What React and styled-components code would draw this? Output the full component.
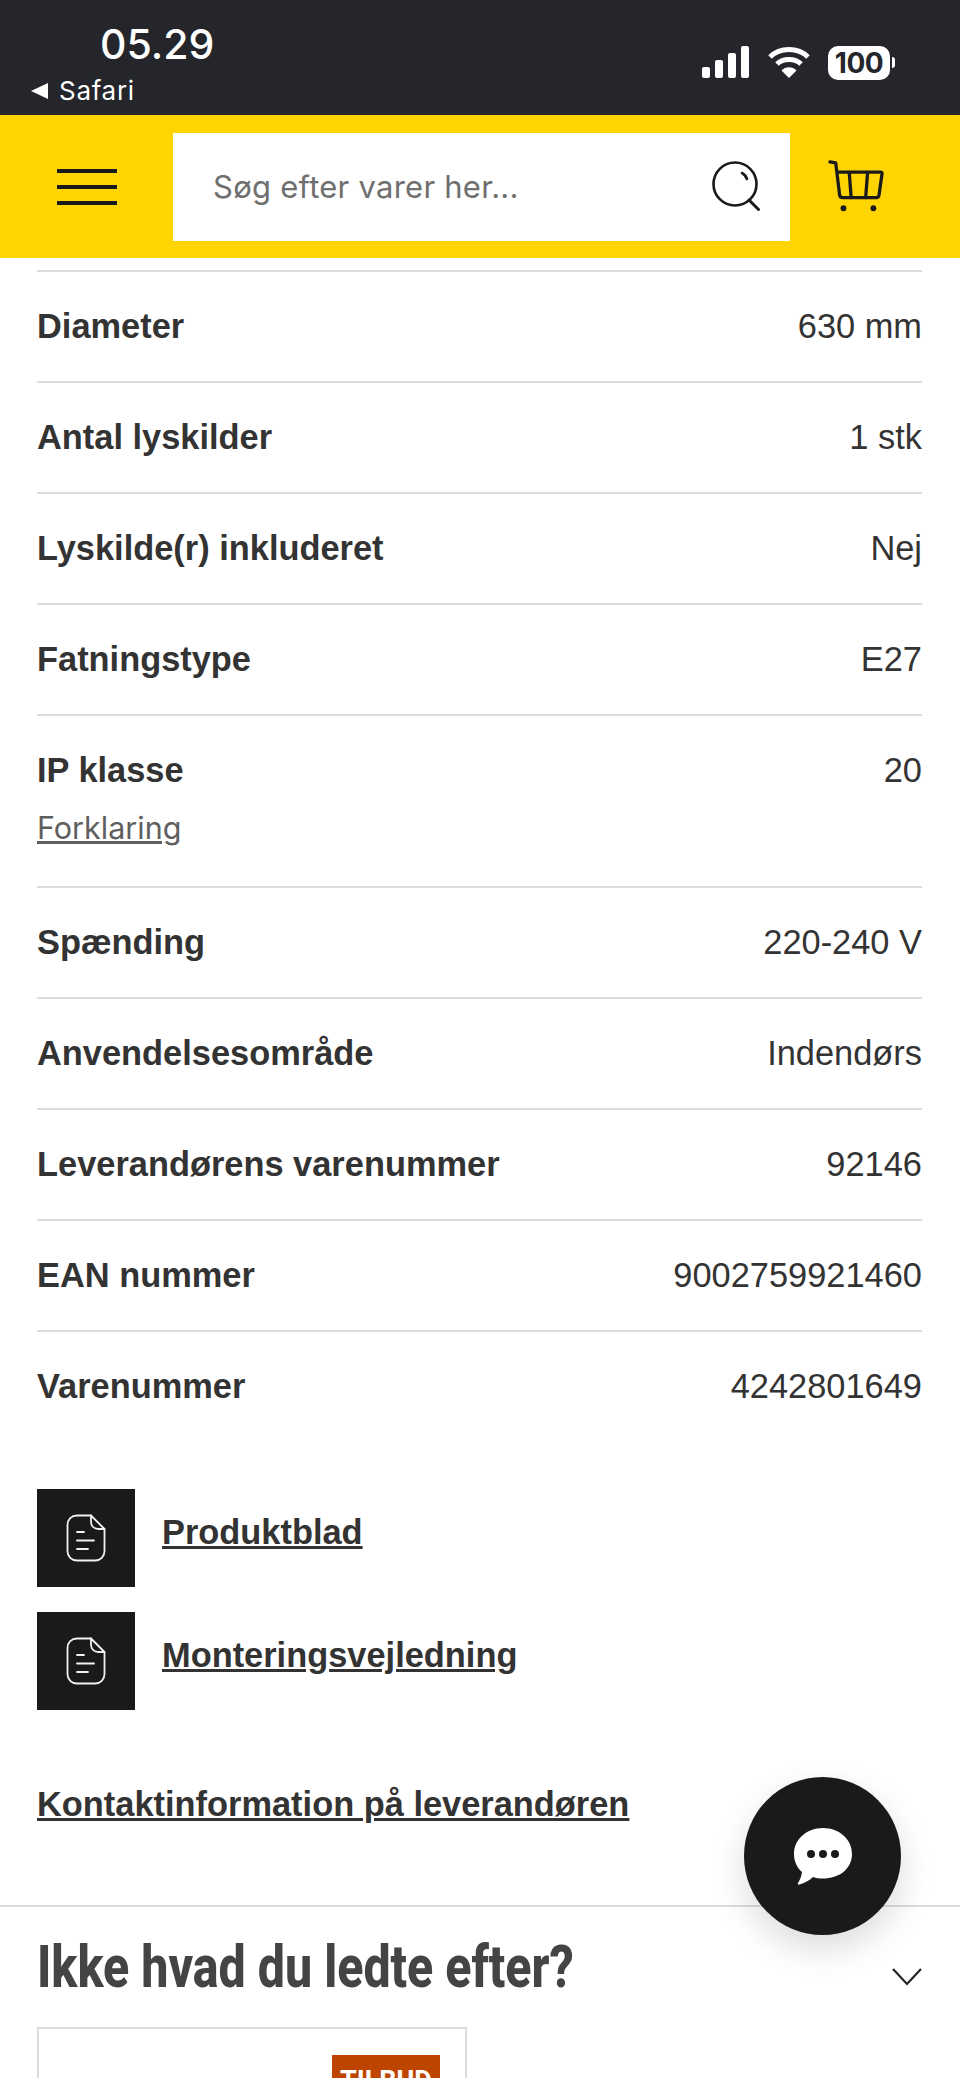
import React from 'react';
import styled, { createGlobalStyle } from 'styled-components';

const GlobalStyle = createGlobalStyle`
  html, body {
    margin: 0;
    padding: 0;
    height: 2078px;
    overflow: hidden;
    background: #fff;
  }
`;

const Page = styled.div`
  position: relative;
  width: 960px;
  height: 2078px;
  overflow: hidden;
  font-family: "Liberation Sans", Arial, sans-serif;
  color: #333;
`;

const StatusBar = styled.div`
  height: 115px;
  background: #24262b;
  color: #fff;
  display: flex;
  justify-content: space-between;
  font-family: Inter, sans-serif;
`;

const StatusLeft = styled.div`
  display: flex;
  flex-direction: column;
  padding: 21px 0 0 31px;
`;

const Time = styled.div`
  font-size: 41px;
  font-weight: 500;
  line-height: 46px;
  margin-left: 69px;
`;

const BackLink = styled.div`
  display: flex;
  align-items: center;
  gap: 11px;
  font-size: 26px;
  line-height: 30px;
  letter-spacing: 0.7px;
  margin-top: 9px;
`;

const BackArrow = styled.span`
  width: 0;
  height: 0;
  border-top: 8.5px solid transparent;
  border-bottom: 8.5px solid transparent;
  border-right: 17px solid #fff;
`;

const StatusRight = styled.div`
  display: flex;
  align-items: flex-start;
  gap: 18px;
  padding: 46px 67px 0 0;
`;

const Battery = styled.div`
  position: relative;
  width: 62px;
  height: 34px;
  background: #fff;
  border-radius: 10px;
  color: #24262b;
  font-size: 28px;
  font-weight: 700;
  line-height: 34px;
  text-align: center;
  letter-spacing: -0.5px;
  margin-right: 3px;

  &::after {
    content: '';
    position: absolute;
    right: -5px;
    top: 11px;
    width: 3px;
    height: 11px;
    border-radius: 0 3px 3px 0;
    background: #fff;
  }
`;

const Header = styled.header`
  height: 143px;
  background: #ffd403;
  display: flex;
  align-items: center;
`;

const MenuButton = styled.button`
  width: 173px;
  height: 100%;
  border: 0;
  background: none;
  padding: 0 0 0 57px;
  display: flex;
  flex-direction: column;
  justify-content: center;
  gap: 12px;
`;

const MenuLine = styled.span`
  display: block;
  width: 60px;
  height: 4px;
  background: #1a1a1a;
`;

const SearchBox = styled.div`
  width: 617px;
  height: 108px;
  background: #fff;
  display: flex;
  align-items: center;
  justify-content: space-between;
  padding: 0 28px 0 40px;
  box-sizing: border-box;
`;

const Placeholder = styled.span`
  font-family: Inter, sans-serif;
  font-size: 31px;
  letter-spacing: 0.25px;
  color: #6f6f6f;
`;

const CartButton = styled.div`
  flex: 1;
  display: flex;
  padding-left: 38px;
`;

const Specs = styled.dl`
  margin: 12px 38px 0 37px;
  border-top: 2px solid #dcdcdc;
`;

const SpecRow = styled.div`
  height: ${p => (p.$tall ? 135 : 74)}px;
  border-bottom: 2px solid #dcdcdc;
  display: flex;
  justify-content: space-between;
  align-items: flex-start;
  padding-top: 35px;
  font-size: 34.400px;
  line-height: 38px;

  &:last-child {
    border-bottom: 0;
  }
`;

const SpecName = styled.dt`
  font-weight: 700;
  color: #333;
`;

const SpecValue = styled.dd`
  margin: 0;
  color: #333;
`;

const Explain = styled.a`
  display: block;
  margin-top: 20px;
  font-family: Inter, sans-serif;
  font-size: 30.500px;
  font-weight: 400;
  line-height: 38px;
  color: #5f5f5f;
  text-decoration: underline;
`;

const Documents = styled.div`
  margin: 48px 0 0 37px;
  display: flex;
  flex-direction: column;
  gap: 25px;
`;

const DocRow = styled.a`
  display: flex;
  gap: 27px;
  color: #333;
`;

const DocIcon = styled.span`
  width: 98px;
  height: 98px;
  background: #1a1a1a;
  display: flex;
  align-items: center;
  justify-content: center;
`;

const DocLabel = styled.span`
  font-size: 34.400px;
  font-weight: 700;
  line-height: 38px;
  margin-top: 24px;
  text-decoration: underline;
`;

const Contact = styled.a`
  display: block;
  margin: 74px 0 0 37px;
  font-size: 34.400px;
  font-weight: 700;
  line-height: 40px;
  color: #333;
  text-decoration: underline;
`;

const Related = styled.section`
  margin-top: 81px;
  border-top: 2px solid #dcdcdc;
  padding: 0 38px 0 37px;
`;

const RelatedHead = styled.div`
  display: flex;
  justify-content: space-between;
  align-items: flex-start;
  height: 120px;
`;

const RelatedTitle = styled.h2`
  margin: 27px 0 0;
  font-family: Roboto, sans-serif;
  font-size: 60px;
  font-weight: 800;
  line-height: 66px;
  color: #444;
  white-space: nowrap;
  transform: scaleX(0.805);
  transform-origin: left center;
`;

const ProductCard = styled.div`
  width: 430px;
  height: 300px;
  border: 2px solid #ddd;
  box-sizing: border-box;
  display: flex;
  justify-content: flex-end;
  padding: 26px 25px 0 0;
`;

const OfferBadge = styled.div`
  width: 108px;
  height: 60px;
  background: #bd4500;
  color: #fff;
  font-family: Roboto, sans-serif;
  font-size: 27px;
  font-weight: 700;
  line-height: 52px;
  text-align: center;
`;

const ChatButton = styled.button`
  position: absolute;
  left: 744px;
  top: 1777px;
  width: 157px;
  height: 158px;
  border: 0;
  border-radius: 50%;
  background: #1a1a1a;
  box-shadow: 0 14px 34px rgba(0, 0, 0, 0.14);
  display: flex;
  align-items: center;
  justify-content: center;
  padding: 0;
`;

const Signal = () => (
  <svg width="48" height="32" viewBox="1 0 48 32" fill="#fff">
    <rect x="1" y="21" width="8" height="11" rx="2" />
    <rect x="14" y="14" width="8" height="18" rx="2" />
    <rect x="27" y="7" width="8" height="25" rx="2" />
    <rect x="40" y="0" width="8" height="32" rx="2" />
  </svg>
);

const Wifi = () => (
  <svg width="42" height="32" viewBox="0 0 42 32" fill="none" stroke="#fff" strokeWidth="5">
    <path d="M2 11C12 1 30 1 40 11" />
    <path d="M9 18C15 12 27 12 33 18" />
    <path d="M21 32l-7.5-7.5C17 20 25 20 28.5 24.500z" fill="#fff" stroke="none" />
  </svg>
);

const SearchIcon = () => (
  <svg width="50" height="52" viewBox="0 0 50 52" fill="none" stroke="#1a1a1a" strokeWidth="2.600" strokeLinecap="round">
    <circle cx="23" cy="23" r="21.500" />
    <path d="M30 12c2.500 1.300 4 3 5 6" />
    <path d="M37 39l9.500 9.500" strokeWidth="3" />
  </svg>
);

const CartIcon = () => (
  <svg width="56" height="56" viewBox="0 0 58 56" fill="none" stroke="#1a1a1a" strokeWidth="3.400" strokeLinecap="round" strokeLinejoin="round">
    <path d="M2 2l6 1 4 33c.2 1.500 1 3 3 3h35c1.600 0 2.500-1 2.800-2.500L56 14c.1-1-.5-1.500-1.500-1.500H9" />
    <path d="M22 13l2 26M41 13l-2 26" />
    <circle cx="16" cy="50" r="3" fill="#1a1a1a" stroke="none" />
    <circle cx="47" cy="50" r="3" fill="#1a1a1a" stroke="none" />
  </svg>
);

const FileIcon = () => (
  <svg width="40" height="48" viewBox="0 0 40 48" fill="none" stroke="#f2f2f2" strokeWidth="1.800" strokeLinecap="round" strokeLinejoin="round">
    <path d="M25 1.500H11C5.500 1.500 1.500 5.500 1.500 11v26c0 5.500 4 9.500 9.500 9.500h18c5.500 0 9.500-4 9.500-9.500V15z" />
    <path d="M25 1.500v6c0 4.500 3 7.500 7.500 7.500h6" />
    <path d="M11 18h7M11 26.500h17M11 35h11" />
  </svg>
);

const ChatIcon = () => (
  <svg width="60" height="58" viewBox="0 0 60 58" fill="#fff">
    <path d="M30 1C14 1 1 12 1 27c0 8 3.500 14 8 18-.5 4-2 8-4 11-.5 1 0 2 1.500 1.500 5-1.500 10-4 13.500-7.500 3 1 6.500 1.500 10 1.500 16 0 29-9.500 29-24.500S46 1 30 1z" />
    <circle cx="18" cy="27" r="4" fill="#1a1a1a" />
    <circle cx="30" cy="27" r="4" fill="#1a1a1a" />
    <circle cx="42" cy="27" r="4" fill="#1a1a1a" />
  </svg>
);

const ChevronSvg = styled.svg`
  margin-top: 61px;
`;

const Chevron = () => (
  <ChevronSvg width="30" height="18" viewBox="0 0 30 18" fill="none" stroke="#222" strokeWidth="2.200">
    <path d="M1 1l14 15L29 1" />
  </ChevronSvg>
);

const rows = [
  ['Diameter', '630 mm'],
  ['Antal lyskilder', '1 stk'],
  ['Lyskilde(r) inkluderet', 'Nej'],
  ['Fatningstype', 'E27'],
  ['IP klasse', '20', true],
  ['Spænding', '220-240 V'],
  ['Anvendelsesområde', 'Indendørs'],
  ['Leverandørens varenummer', '92146'],
  ['EAN nummer', '9002759921460'],
  ['Varenummer', '4242801649'],
];

export default function App() {
  return (
    <Page>
      <GlobalStyle />
      <StatusBar>
        <StatusLeft>
          <Time>05.29</Time>
          <BackLink>
            <BackArrow />
            Safari
          </BackLink>
        </StatusLeft>
        <StatusRight>
          <Signal />
          <Wifi />
          <Battery>100</Battery>
        </StatusRight>
      </StatusBar>

      <Header>
        <MenuButton aria-label="Menu">
          <MenuLine />
          <MenuLine />
          <MenuLine />
        </MenuButton>
        <SearchBox>
          <Placeholder>Søg efter varer her...</Placeholder>
          <SearchIcon />
        </SearchBox>
        <CartButton>
          <CartIcon />
        </CartButton>
      </Header>

      <Specs>
        {rows.map(([name, value, tall]) => (
          <SpecRow key={name} $tall={tall}>
            <SpecName>
              {name}
              {tall && <Explain>Forklaring</Explain>}
            </SpecName>
            <SpecValue>{value}</SpecValue>
          </SpecRow>
        ))}
      </Specs>

      <Documents>
        <DocRow>
          <DocIcon><FileIcon /></DocIcon>
          <DocLabel>Produktblad</DocLabel>
        </DocRow>
        <DocRow>
          <DocIcon><FileIcon /></DocIcon>
          <DocLabel>Monteringsvejledning</DocLabel>
        </DocRow>
      </Documents>

      <Contact>Kontaktinformation på leverandøren</Contact>

      <Related>
        <RelatedHead>
          <RelatedTitle>Ikke hvad du ledte efter?</RelatedTitle>
          <Chevron />
        </RelatedHead>
        <ProductCard>
          <OfferBadge>TILBUD</OfferBadge>
        </ProductCard>
      </Related>

      <ChatButton aria-label="Chat">
        <ChatIcon />
      </ChatButton>
    </Page>
  );
}
